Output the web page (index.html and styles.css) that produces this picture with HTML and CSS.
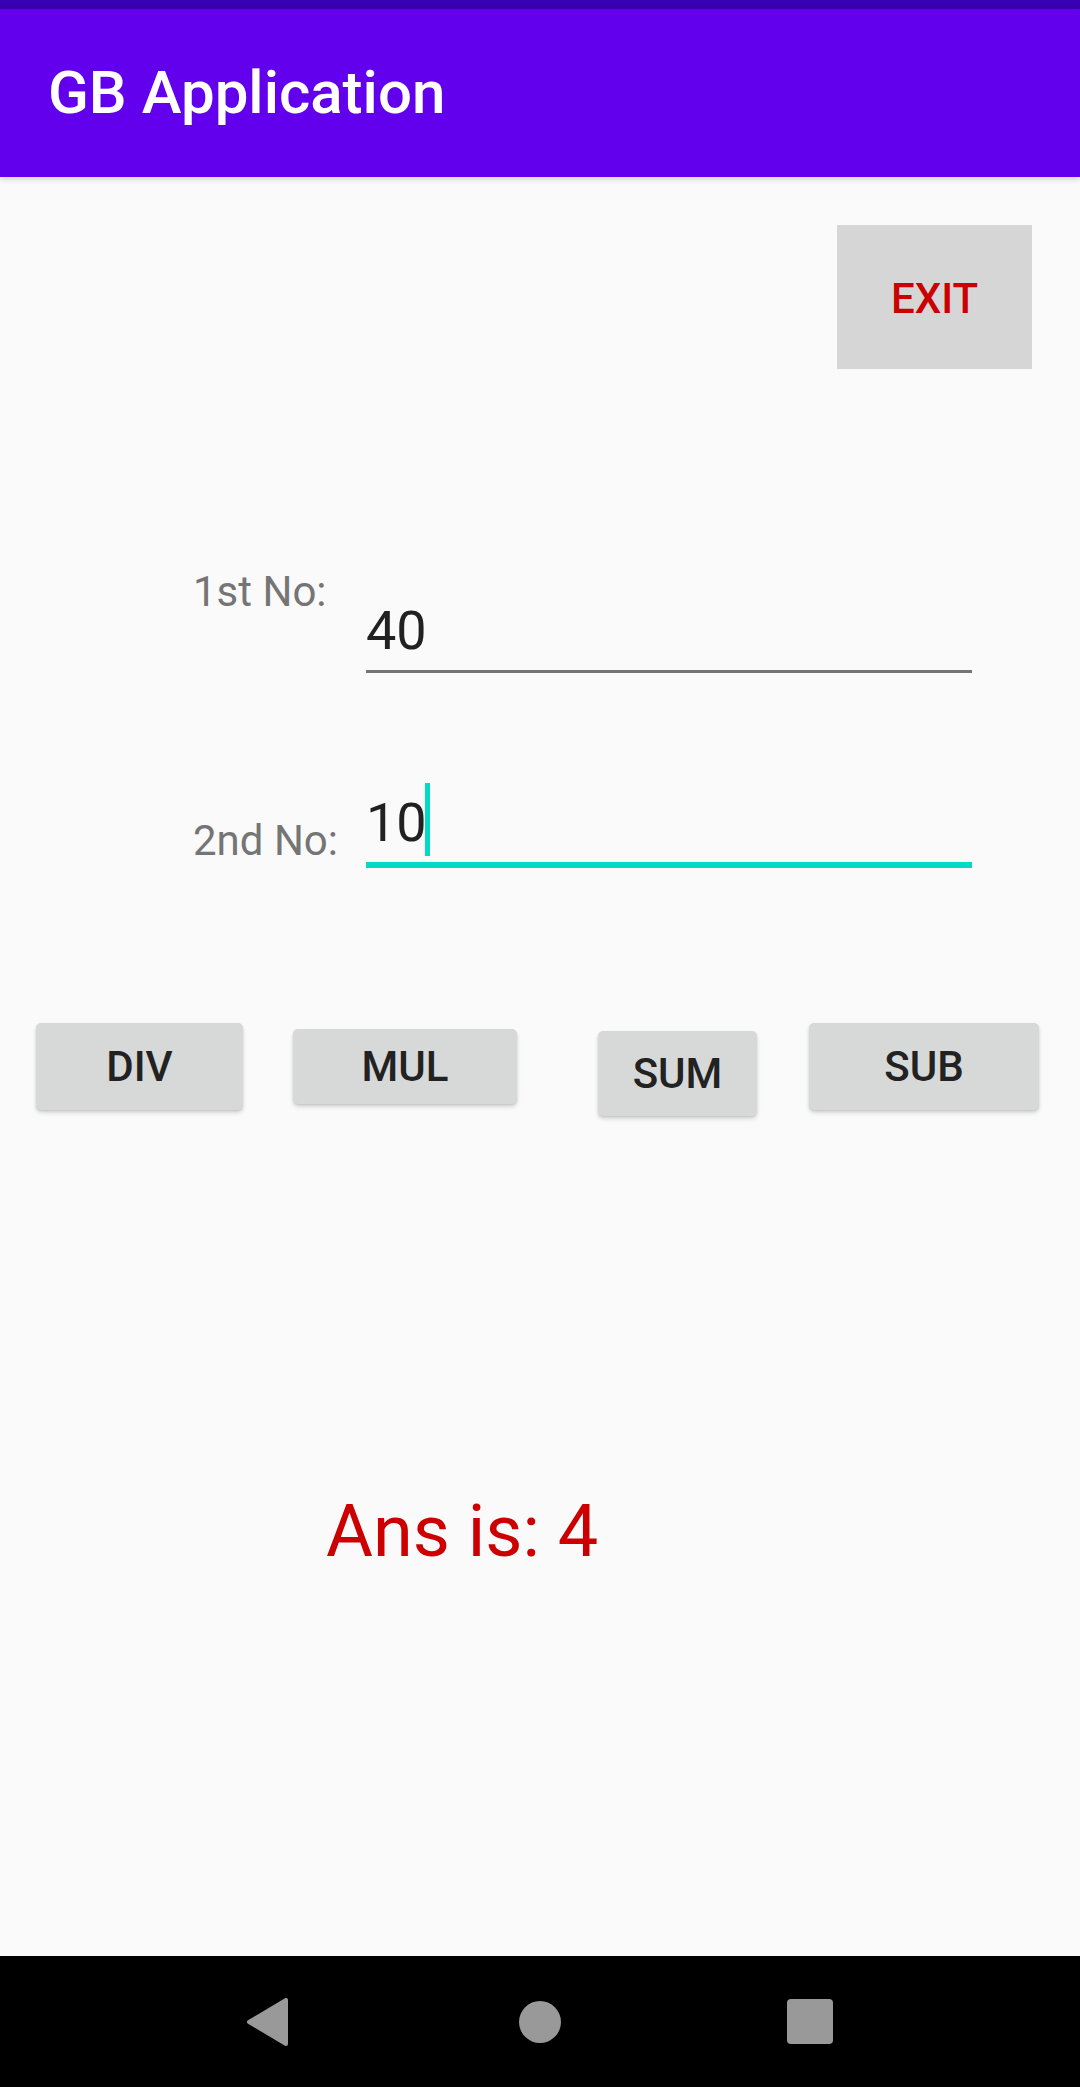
FILE: index.html
```html
<!DOCTYPE html>
<html lang="en">
<head>
<meta charset="utf-8">
<title>GB Application</title>
<link rel="stylesheet" href="styles.css">
</head>
<body>
<div class="screen">
  <div class="status"></div>
  <header class="toolbar"><h1 class="title">GB Application</h1></header>
  <main class="content">
    <div class="exit-row"><button class="exit">EXIT</button></div>

    <div class="field-row row1">
      <label class="lbl">1st No:</label>
      <div class="field field-top">
        <div class="value"><span class="txt">40</span></div>
      </div>
    </div>

    <div class="field-row row2">
      <label class="lbl lbl-low">2nd No:</label>
      <div class="field">
        <div class="value focused"><span class="txt">10<span class="caret"></span></span></div>
      </div>
    </div>

    <div class="btn-row">
      <button class="btn b-div">DIV</button>
      <button class="btn b-mul">MUL</button>
      <button class="btn b-sum">SUM</button>
      <button class="btn b-sub">SUB</button>
    </div>

    <p class="ans">Ans is: 4</p>
  </main>
  <nav class="navbar">
    <svg class="nav-back" width="42" height="48" viewBox="0 0 42 48"><polygon points="3,24 40,2 40,46" fill="#999" stroke="#999" stroke-width="4" stroke-linejoin="round"/></svg>
    <span class="nav-home"></span>
    <span class="nav-recent"></span>
  </nav>
</div>
</body>
</html>
```

FILE: styles.css
```css
* { box-sizing: border-box; }
html, body { margin: 0; padding: 0; }
body {
  background: #fafafa;
  font-family: Roboto, "Noto Sans", "Liberation Sans", sans-serif;
}
.screen {
  width: 1080px;
  height: 2087px;
  display: flex;
  flex-direction: column;
  overflow: hidden;
}
.status {
  height: 9px;
  background: #3700b3;
  flex: none;
}
.toolbar {
  height: 168px;
  flex: none;
  background: #6200ee;
  display: flex;
  align-items: center;
  padding-left: 48px;
  position: relative;
  z-index: 2;
  box-shadow: 0 2px 6px rgba(0, 0, 0, 0.18);
}
.title {
  margin: 0;
  color: #fff;
  font-size: 60px;
  font-weight: 500;
  line-height: 70px;
}
.content {
  height: 1779px;
  flex: none;
  background: #fafafa;
  display: flex;
  flex-direction: column;
  position: relative;
  z-index: 1;
}
.exit-row {
  display: flex;
  justify-content: flex-end;
  padding-top: 48px;
  padding-right: 48px;
}
.exit {
  width: 195px;
  height: 144px;
  border: none;
  border-radius: 0;
  background: #d6d6d6;
  color: #cc0000;
  font-family: Roboto, "Liberation Sans", sans-serif;
  font-size: 42px;
  font-weight: 500;
  padding: 0;
  padding-top: 2px;
}
.field-row {
  display: flex;
  align-items: flex-start;
  padding-left: 193px;
}
.row1 { margin-top: 198px; }
.row2 { margin-top: 118px; }
.lbl {
  width: 173px;
  flex: none;
  font-size: 42px;
  line-height: 49px;
  color: #757575;
}
.lbl-low { margin-top: 25px; }
.field {
  width: 606px;
  flex: none;
}
.field-top { margin-top: 32px; }
.value {
  font-size: 54px;
  line-height: 63px;
  color: #212121;
  padding-bottom: 8px;
  border-bottom: 3px solid #757575;
}
.value.focused {
  border-bottom: 6px solid #03dac5;
}
.txt {
  display: inline-block;
  position: relative;
}
.caret {
  position: absolute;
  right: -3px;
  top: -8px;
  width: 5px;
  height: 73px;
  background: #03dac5;
}
.btn-row {
  display: flex;
  align-items: flex-start;
  padding-left: 36px;
  margin-top: 155px;
}
.btn {
  border: none;
  border-radius: 5px;
  background: #d7d8d8;
  color: #222;
  font-family: Roboto, "Liberation Sans", sans-serif;
  font-size: 42px;
  font-weight: 500;
  padding: 0;
  display: flex;
  align-items: center;
  justify-content: center;
  box-shadow: 0 3px 4px rgba(0, 0, 0, 0.14), 0 1px 2px rgba(0, 0, 0, 0.1);
}
.b-div { width: 207px; height: 87px; }
.b-mul { width: 224px; height: 75px; margin-left: 50px; margin-top: 6px; }
.b-sum { width: 159px; height: 85px; margin-left: 81px; margin-top: 8px; }
.b-sub { width: 230px; height: 87px; margin-left: 52px; }
.ans {
  margin: 374px 0 0 0;
  padding-left: 326px;
  font-size: 72px;
  line-height: 84px;
  color: #cc0000;
}
.navbar {
  height: 131px;
  flex: none;
  background: #000;
  display: flex;
  align-items: center;
  padding-left: 246px;
}
.nav-back { display: block; flex: none; }
.nav-home {
  width: 42px;
  height: 42px;
  border-radius: 50%;
  background: #999;
  margin-left: 231px;
  flex: none;
}
.nav-recent {
  width: 46px;
  height: 45px;
  border-radius: 4px;
  background: #999;
  margin-left: 226px;
  flex: none;
}
```
